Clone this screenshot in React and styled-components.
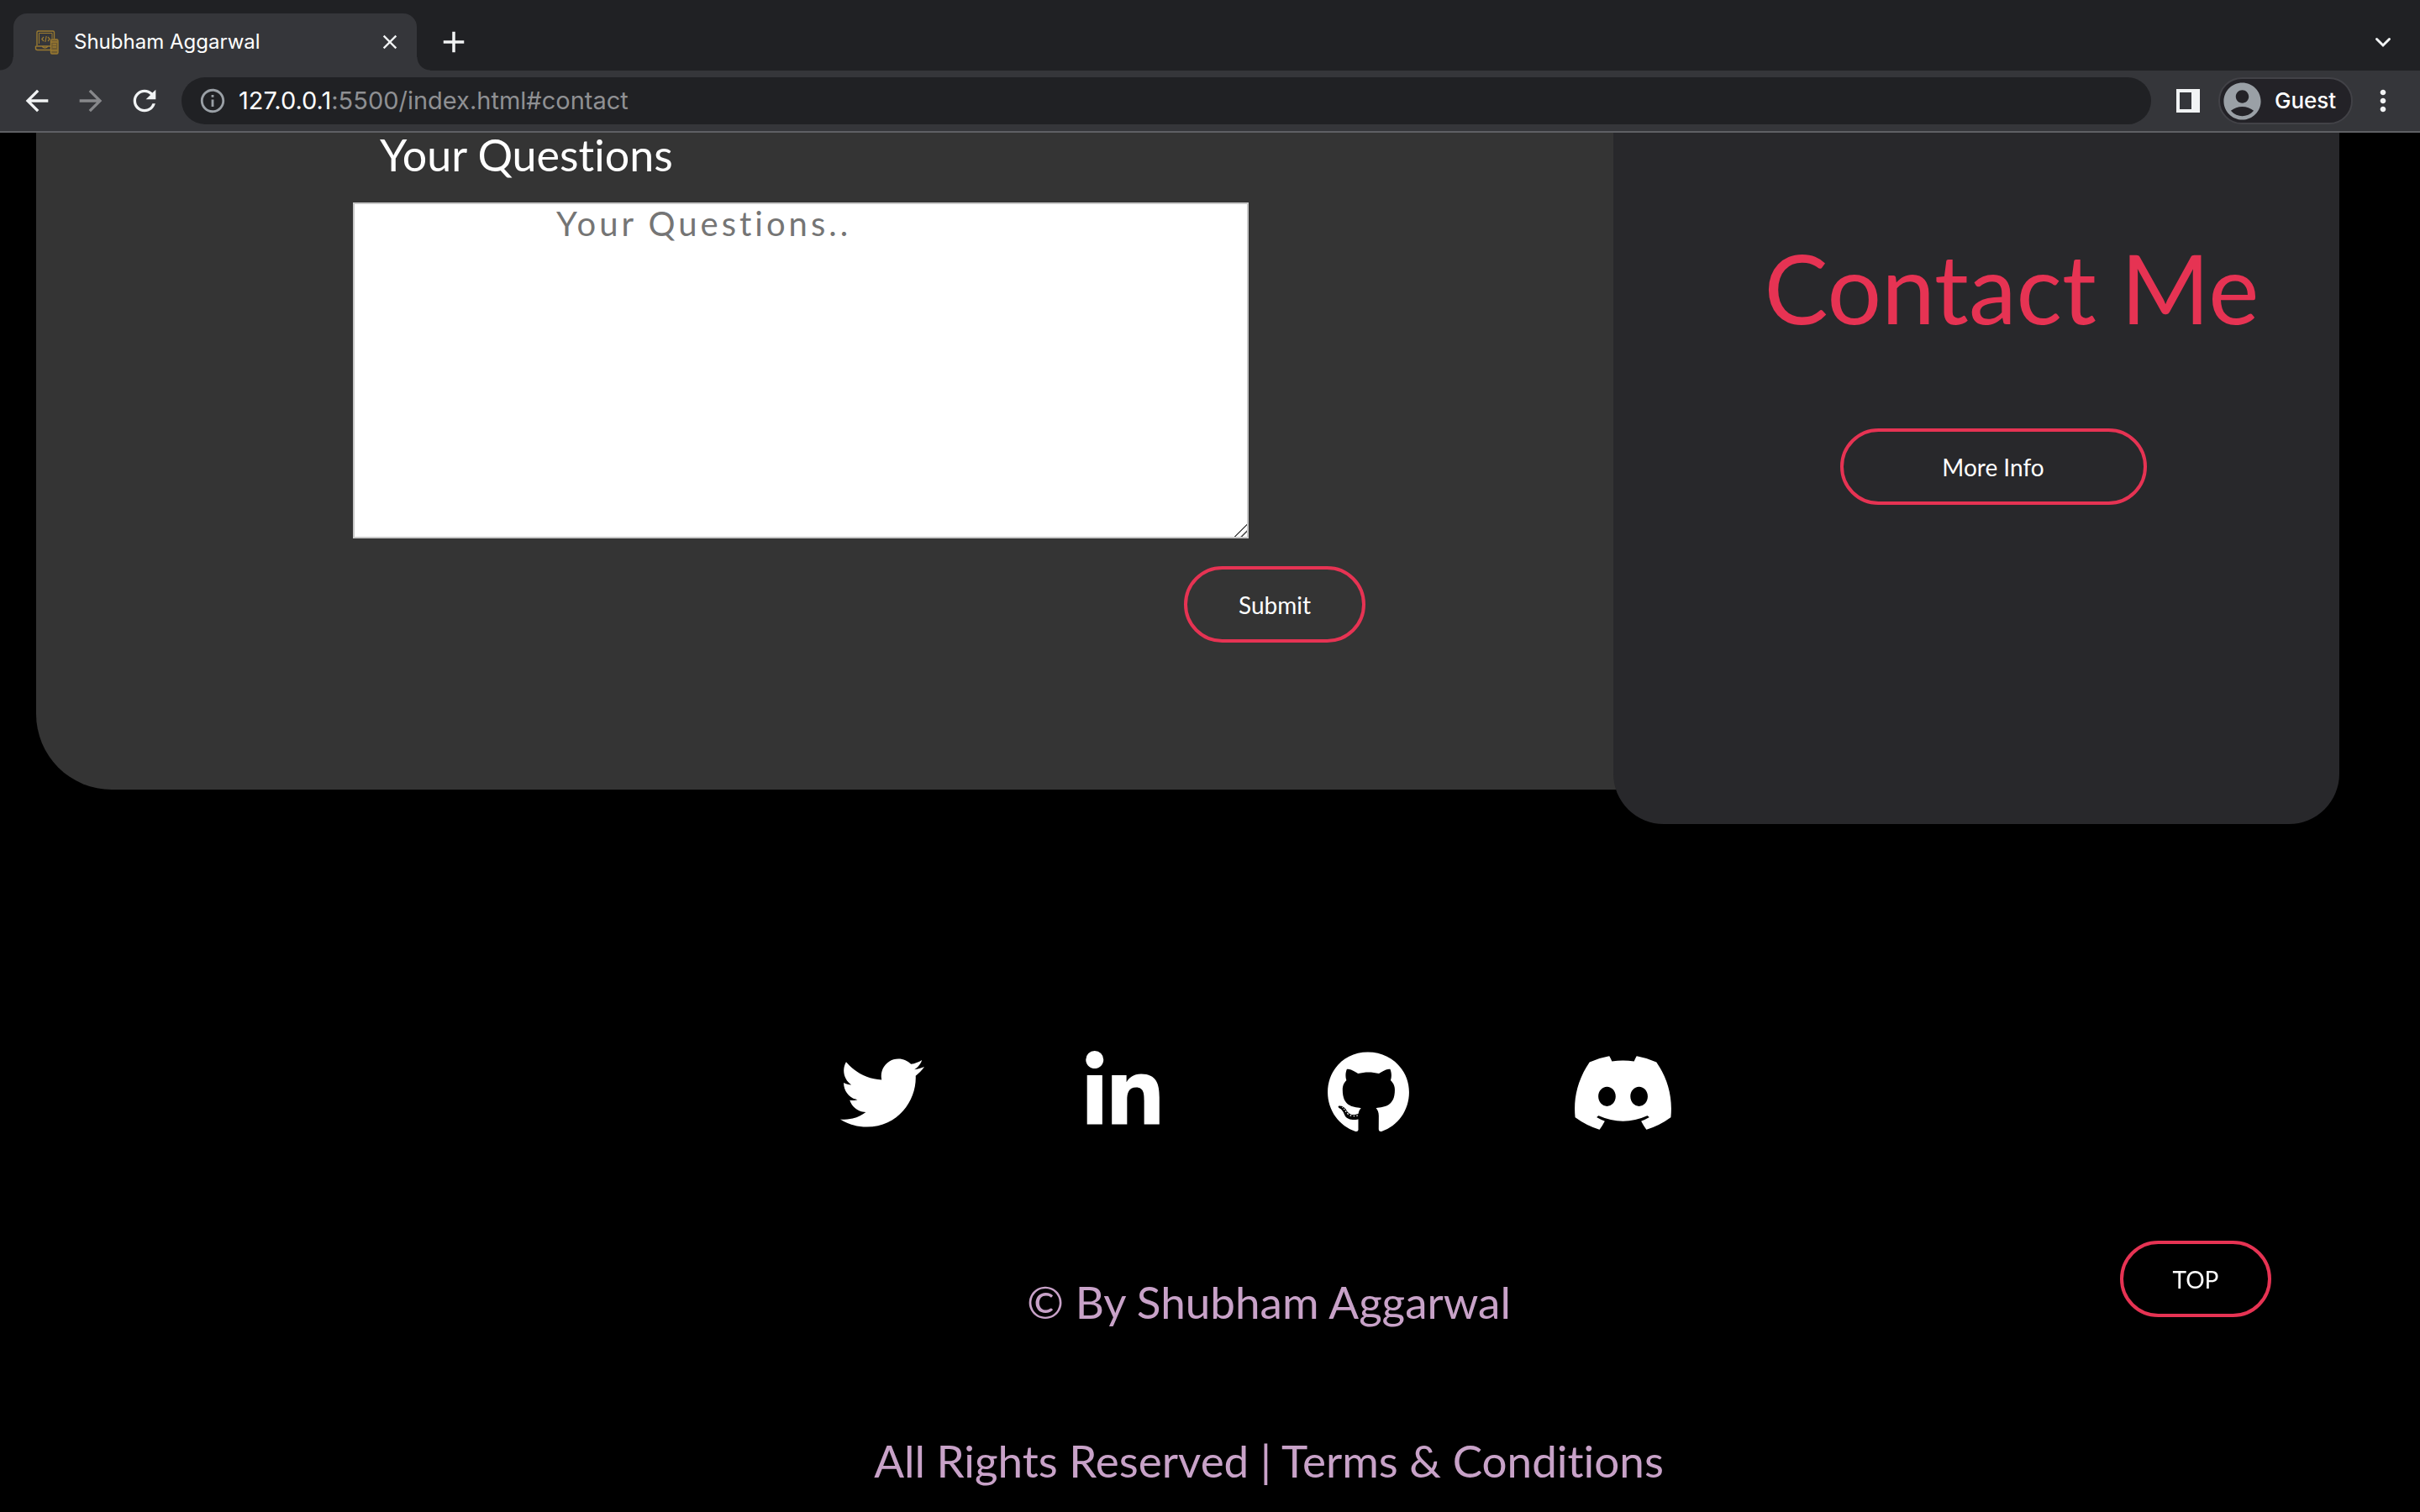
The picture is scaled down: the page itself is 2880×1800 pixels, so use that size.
import React from "react";
import styled, { createGlobalStyle } from "styled-components";
import { FaTwitter, FaLinkedinIn, FaGithub } from "react-icons/fa";
import { FaDiscord } from "react-icons/fa6";
import {
  MdArrowBack,
  MdArrowForward,
  MdRefresh,
  MdInfoOutline,
  MdClose,
  MdAdd,
  MdAccountCircle,
  MdMoreVert,
} from "react-icons/md";

const GlobalStyle = createGlobalStyle`
  *, *::before, *::after { box-sizing: border-box; }
  body {
    margin: 0;
    background: #000;
    color: #fff;
    font-family: Lato, "Open Sans", sans-serif;
    font-variant-ligatures: none;
  }
  button { font: inherit; color: inherit; }
`;

const Window = styled.div`
  display: flex;
  flex-direction: column;
  min-height: 100vh;
`;

/* ---------- browser frame ---------- */

const Frame = styled.header`
  border-bottom: 2px solid #5f6064;
  font-family: Inter, Roboto, sans-serif;
  font-optical-sizing: none;
`;

const TabStrip = styled.div`
  display: flex;
  align-items: flex-end;
  height: 84px;
  background: #202124;
`;

const TabCurve = styled.span`
  width: 16px;
  height: 16px;
  background: radial-gradient(
    circle at ${(p) => (p.$side === "left" ? "0 0" : "100% 0")},
    #202124 15px,
    #35363a 16px
  );
`;

const Tab = styled.div`
  display: flex;
  align-items: center;
  gap: 16px;
  width: 480px;
  height: 68px;
  padding: 0 16px 0 24px;
  border-radius: 16px 16px 0 0;
  background: #35363a;
`;

const TabTitle = styled.span`
  flex: 1;
  font-size: 24px;
  line-height: 32px;
`;

const IconButton = styled.button`
  display: flex;
  align-items: center;
  justify-content: center;
  flex: none;
  width: ${(p) => p.$width || 48}px;
  height: 48px;
  padding: 0;
  border: 0;
  background: none;
  color: ${(p) => (p.$muted ? "#87888b" : "#f1f3f4")};
`;

const StripTools = styled.div`
  display: flex;
  flex: 1;
  align-items: center;
  justify-content: space-between;
  height: 68px;
  padding: 0 20px 0 4px;
`;

const Toolbar = styled.div`
  display: flex;
  align-items: center;
  gap: 20px;
  height: 72px;
  padding: 0 20px;
  background: #35363a;
`;

const ToolGroup = styled.div`
  display: flex;
  align-items: center;
  gap: ${(p) => p.$gap}px;
`;

const AddressBar = styled.div`
  display: flex;
  flex: 1;
  align-items: center;
  gap: 14px;
  height: 56px;
  padding: 0 20px;
  border-radius: 28px;
  background: #202124;
  color: #9aa0a6;
`;

const Address = styled.span`
  color: #8f9093;
  font-size: 29px;
  line-height: 36px;
`;

const Host = styled.span`
  color: #fff;
`;

const Profile = styled.button`
  display: flex;
  align-items: center;
  gap: 12px;
  width: 160px;
  height: 56px;
  padding: 0;
  border: 2px solid #424247;
  border-radius: 28px;
  background: #232227;
  font-size: 26px;
  font-weight: 500;
  line-height: 36px;

  svg {
    flex: none;
    color: #9aa0a6;
  }
`;

/* ---------- page ---------- */

const Contact = styled.main`
  display: flex;
  align-items: flex-start;
  padding: 0 96px 0 43px;
`;

/* Runs a little way under the info card, behind its rounded corner. */
const FormPanel = styled.section`
  flex: 1;
  height: 782px;
  margin-right: -8px;
  padding-left: 377px;
  border-radius: 0 0 0 90px;
  background: #343434;
`;

const Form = styled.form`
  display: flex;
  flex-direction: column;
  align-items: flex-start;
  width: 1205px;
`;

const Label = styled.label`
  padding-left: 32px;
  font-size: 52px;
  line-height: 52px;
`;

const Question = styled.textarea`
  width: 1066px;
  height: 400px;
  margin: 31px 0 33px;
  padding: 0 0 0 240px;
  border: 2px solid #c8c8c8;
  border-radius: 0;
  outline: 0;
  background: #fff;
  color: #343434;
  font-family: inherit;
  font-size: 40px;
  line-height: 46px;
  letter-spacing: 4px;

  &::placeholder {
    color: #757575;
  }

  &::-webkit-resizer {
    background: linear-gradient(
      135deg,
      #fff 47%,
      #555 48% 54%,
      #fff 55% 73%,
      #555 74% 80%,
      #fff 81%
    );
  }
`;

const Pill = styled.button`
  display: flex;
  align-items: center;
  justify-content: center;
  width: ${(p) => p.$width}px;
  height: 91px;
  padding: 0;
  border: 4px solid #e63353;
  border-radius: 46px;
  background: transparent;
  color: #fff;
  font-size: 28px;
  line-height: 36px;
  text-decoration: none;
`;

const SubmitRow = styled.div`
  align-self: flex-end;
`;

const InfoCard = styled.aside`
  display: flex;
  flex-direction: column;
  align-items: center;
  gap: 98px;
  width: 864px;
  height: 823px;
  padding: 114px 0 0 40px;
  border-radius: 0 0 60px 60px;
  background: #28282b;
`;

const Title = styled.h1`
  margin: 0;
  padding-left: 44px;
  color: #e63353;
  font-size: 114px;
  font-weight: 400;
  line-height: 140px;
`;

const Footer = styled.footer`
  display: flex;
  flex-direction: column;
  align-items: center;
  gap: 129px;
  padding: 270px 0 30px 140px;
  color: #c8a2c8;
  font-size: 53px;
  line-height: 60px;
`;

const Socials = styled.nav`
  display: flex;
  gap: 192px;
  height: 140px;
  padding-right: 26px;
`;

const SocialLink = styled.a`
  min-width: 96px;
  height: 100px;
  color: #fff;

  svg {
    display: block;
    width: ${(p) => p.$width}px;
    height: 100px;
  }
`;

const Line = styled.p`
  margin: 0;
`;

const BackToTop = styled(Pill)`
  position: fixed;
  right: 177px;
  bottom: 232px;
`;

const SOCIALS = [
  { name: "Twitter", Icon: FaTwitter, width: 100 },
  { name: "LinkedIn", Icon: FaLinkedinIn, width: 88 },
  { name: "GitHub", Icon: FaGithub, width: 97 },
  { name: "Discord", Icon: FaDiscord, width: 125 },
];

function SiteIcon() {
  return (
    <svg width="32" height="32" viewBox="0 0 32 32" fill="none" stroke="#9a7a30" strokeWidth="1.4" aria-hidden="true">
      <path d="M4 20V4.500Q4 3 5.500 3H23Q24.500 3 24.500 4.500V12" />
      <path d="M6.500 18V5.500H22V12" strokeWidth="1" />
      <path d="M2.500 21H20M2.500 21V23.500Q2.500 25.500 4.500 25.500H20M10 21Q11 23 13.500 23Q16 23 17 21" />
      <path d="M12 10L9.800 12.500L12 15M17 10L19.200 12.500L17 15M15.200 9L13.800 16" strokeWidth="1.200" />
      <rect x="20.500" y="13" width="8.500" height="17" rx="1.500" fill="#6f5b30" />
      <path d="M21 16H28.500M21 26H28.500M22.500 19H27M22.500 22H27" />
    </svg>
  );
}

function ChevronIcon() {
  return (
    <svg width="24" height="24" viewBox="0 0 24 24" fill="none" stroke="currentColor" strokeWidth="3" strokeLinecap="round" aria-hidden="true">
      <path d="M4.500 8.500L12 16L19.500 8.500" />
    </svg>
  );
}

function SidePanelIcon() {
  return (
    <svg width="28" height="28" viewBox="0 0 28 28" fill="currentColor" fillRule="evenodd" aria-hidden="true">
      <path d="M0 0H28V28H0ZM4 4V24H18V4Z" />
    </svg>
  );
}

export default function App() {
  return (
    <Window>
      <GlobalStyle />
      <Frame>
        <TabStrip>
          <TabCurve $side="left" />
          <Tab>
            <SiteIcon />
            <TabTitle>Shubham Aggarwal</TabTitle>
            <IconButton $width={32} aria-label="Close tab">
              <MdClose size={28} />
            </IconButton>
          </Tab>
          <TabCurve $side="right" />
          <StripTools>
            <IconButton aria-label="New tab">
              <MdAdd size={42} />
            </IconButton>
            <IconButton aria-label="Search tabs">
              <ChevronIcon />
            </IconButton>
          </StripTools>
        </TabStrip>
        <Toolbar>
          <ToolGroup $gap={16}>
            <IconButton aria-label="Back">
              <MdArrowBack size={40} />
            </IconButton>
            <IconButton aria-label="Forward" $muted>
              <MdArrowForward size={40} />
            </IconButton>
            <IconButton aria-label="Reload">
              <MdRefresh size={40} />
            </IconButton>
          </ToolGroup>
          <AddressBar>
            <MdInfoOutline size={34} />
            <Address>
              <Host>127.0.0.1</Host>:5500/index.html#contact
            </Address>
          </AddressBar>
          <ToolGroup $gap={12}>
            <IconButton aria-label="Side panel">
              <SidePanelIcon />
            </IconButton>
            <Profile>
              <MdAccountCircle size={53} />
              Guest
            </Profile>
            <IconButton aria-label="Menu">
              <MdMoreVert size={40} />
            </IconButton>
          </ToolGroup>
        </Toolbar>
      </Frame>

      <Contact id="contact">
        <FormPanel>
          <Form onSubmit={(e) => e.preventDefault()}>
            <Label htmlFor="questions">Your Questions</Label>
            <Question id="questions" placeholder="Your Questions.." />
            <SubmitRow>
              <Pill type="submit" $width={216}>
                Submit
              </Pill>
            </SubmitRow>
          </Form>
        </FormPanel>
        <InfoCard>
          <Title>Contact Me</Title>
          <Pill type="button" $width={365}>
            More Info
          </Pill>
        </InfoCard>
      </Contact>

      <Footer>
        <Socials aria-label="Social links">
          {SOCIALS.map(({ name, Icon, width }) => (
            <SocialLink key={name} href={`#${name.toLowerCase()}`} aria-label={name} $width={width}>
              <Icon />
            </SocialLink>
          ))}
        </Socials>
        <Line>© By Shubham Aggarwal</Line>
        <Line>All Rights Reserved | Terms &amp; Conditions</Line>
      </Footer>

      <BackToTop as="a" href="#contact" $width={180}>
        TOP
      </BackToTop>
    </Window>
  );
}
